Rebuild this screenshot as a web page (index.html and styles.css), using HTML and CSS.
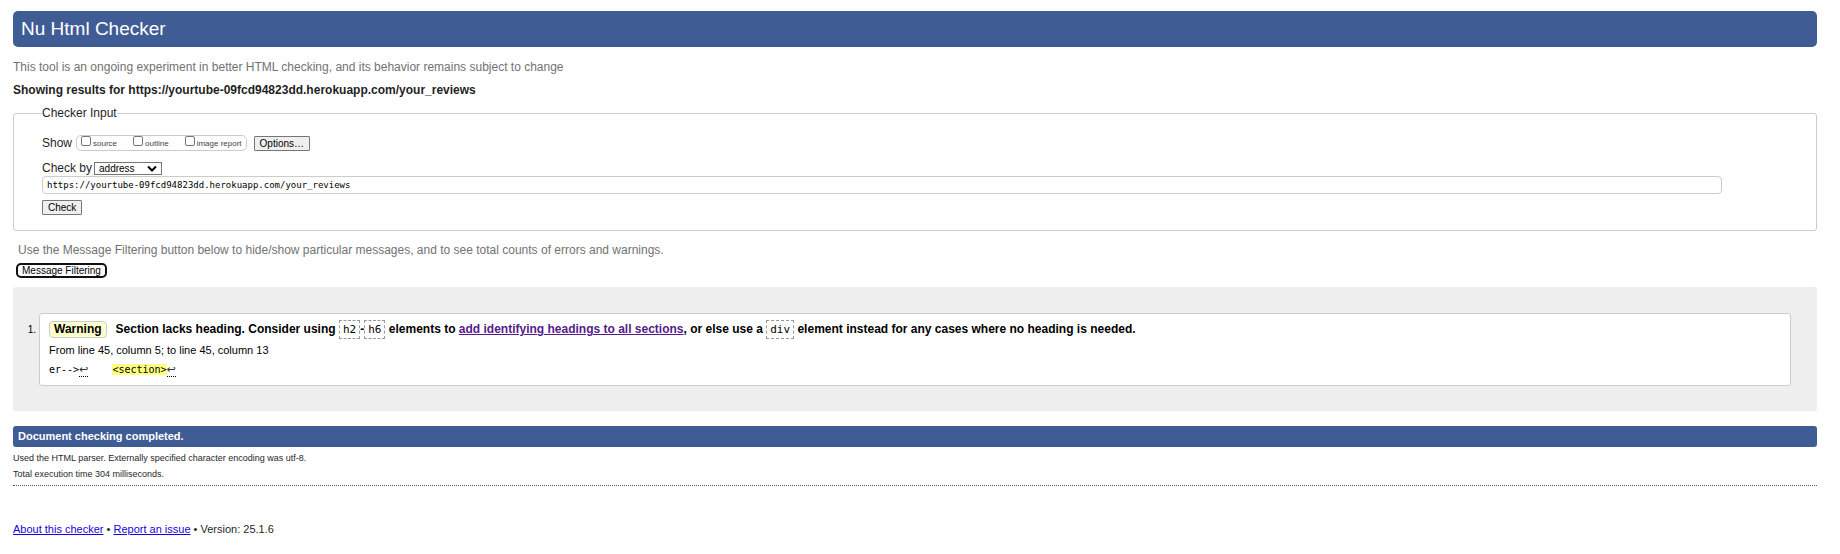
FILE: index.html
```html
<!DOCTYPE html>
<html lang="en">
<head>
<meta charset="utf-8">
<title>Nu Html Checker</title>
<link rel="stylesheet" href="styles.css">
</head>
<body>
<header class="banner"><h1>Nu Html Checker</h1></header>
<p class="note tagline">This tool is an ongoing experiment in better HTML checking, and its behavior remains subject to change</p>
<h2 class="target">Showing results for https://yourtube-09fcd94823dd.herokuapp.com/your_reviews</h2>
<form>
<fieldset class="checker">
  <legend>Checker Input</legend>
  <div class="row show-row">
    <span>Show</span>
    <div class="checks">
      <label><input type="checkbox">source</label>
      <label><input type="checkbox">outline</label>
      <label><input type="checkbox">image report</label>
    </div>
    <button type="button" class="btn options">Options…</button>
  </div>
  <div class="row by-row">
    <label for="by">Check by</label>
    <div class="picker">
      <select id="by"><option>address</option><option>file upload</option><option>text input</option></select>
      <svg viewBox="0 0 10 7" aria-hidden="true"><path d="M1 1.5 5 5.5 9 1.5"/></svg>
    </div>
  </div>
  <input class="url" type="text" aria-label="Address" value="https://yourtube-09fcd94823dd.herokuapp.com/your_reviews">
  <button type="button" class="btn check">Check</button>
</fieldset>
</form>
<p class="note hint">Use the Message Filtering button below to hide/show particular messages, and to see total counts of errors and warnings.</p>
<button type="button" class="filter">Message Filtering</button>
<main class="results">
  <ol>
    <li>
      <p class="message"><strong class="badge">Warning</strong><span>Section lacks heading. Consider using <code>h2</code>-<code>h6</code> elements to <a href="#headings">add identifying headings to all sections</a>, or else use a <code>div</code> element instead for any cases where no heading is needed.</span></p>
      <p class="location">From line 45, column 5; to line 45, column 13</p>
      <p class="extract">er--&gt;<span class="lf">↩</span>    <mark>&lt;section&gt;</mark><span class="lf">↩</span></p>
    </li>
  </ol>
</main>
<p class="done">Document checking completed.</p>
<p class="detail">Used the HTML parser. Externally specified character encoding was utf-8.</p>
<p class="detail">Total execution time 304 milliseconds.</p>
<hr>
<footer><a href="#about">About this checker</a> • <a href="#issue">Report an issue</a> • Version: 25.1.6</footer>
</body>
</html>
```
FILE: styles.css
```css
* { box-sizing: border-box; }
body {
  margin: 11px 23px 0 13px;
  font: 12px/16px "Liberation Sans", Arial, sans-serif;
  color: #1f1f1f;
  background: #fff;
}
h1, h2, p, ol { margin: 0; padding: 0; }
.banner { background: #3f5c94; border-radius: 5px; padding: 6px 8px; color: #fff; }
h1 { font-size: 19px; line-height: 24px; font-weight: 400; }
.note { color: #727272; }
.tagline { margin-top: 12px; }
.target { margin: 7px 0 8px; font-size: 12px; line-height: 16px; }
.checker {
  margin: 0;
  border: 1px solid #ccc;
  border-radius: 3px;
  padding: 15px 94px 15px 28px;
  display: flex;
  flex-direction: column;
  align-items: flex-start;
}
legend { padding: 0; line-height: 14px; }
.row { display: flex; align-items: center; }
.checks {
  display: flex;
  gap: 16px;
  margin: 0 7px 0 4px;
  padding: 0 4px;
  height: 16px;
  border: 1px solid #ccc;
  border-radius: 5px;
  font-size: 8px;
  color: #444;
}
.checks label { display: flex; align-items: center; gap: 2px; line-height: 13px; }
.checks input {
  appearance: none;
  width: 10px;
  height: 10px;
  margin: 0 0 4px;
  border: 1px solid #767676;
  border-radius: 2px;
  background: #fff;
}
.btn {
  font: 10px/13px "Liberation Sans", Arial, sans-serif;
  color: #000;
  background: #efefef;
  border: 1px solid #767676;
  border-radius: 1px;
  padding: 0 5px;
}
.by-row { gap: 2px; margin-top: 9px; }
.picker { display: grid; align-items: center; }
.picker > * { grid-area: 1 / 1; }
select {
  appearance: none;
  width: 68px;
  height: 13px;
  padding: 0 4px;
  border: 1px solid #767676;
  border-radius: 0;
  background: #fff;
  color: #000;
  font: 10px/11px "Liberation Sans", Arial, sans-serif;
}
.picker svg {
  width: 10px;
  height: 7px;
  justify-self: end;
  margin-right: 5px;
  fill: none;
  stroke: #000;
  stroke-width: 2;
  pointer-events: none;
}
.url {
  width: 100%;
  height: 18px;
  padding: 0 4px;
  border: 1px solid #ccc;
  border-radius: 4px;
  font: 9px "DejaVu Sans Mono", monospace;
  color: #000;
}
.check { margin-top: 6px; }
.hint { margin: 11px 5px 5px; }
.filter {
  display: block;
  margin: 0 3px 9px;
  padding: 0 4px;
  border: 2px solid #101010;
  border-radius: 5px;
  background: #fff;
  color: #000;
  font: 10px/11px "Liberation Sans", Arial, sans-serif;
}
.results { background: #eee; border-radius: 3px; padding: 26px 26px 25px; color: #000; }
.results ol { list-style: none; counter-reset: item; }
.results li {
  position: relative;
  background: #fff;
  border: 1px solid #ccc;
  border-radius: 3px;
  padding: 5px 9px 6px;
}
.results li::before {
  counter-increment: item;
  content: counter(item) ".";
  position: absolute;
  right: calc(100% + 4px);
  top: 8px;
  font-size: 10px;
}
.message { display: flex; align-items: center; gap: 9px; font-weight: 700; line-height: 20px; }
.badge {
  border: 1px solid #ccc;
  border-radius: 4px;
  background: #ffffcc;
  padding: 0 4px;
  line-height: 15px;
}
code {
  border: 1px dashed #999;
  padding: 2px 3px;
  font: 11px "DejaVu Sans Mono", monospace;
}
.message a { color: #551a8b; }
.location { font-size: 11px; line-height: 16px; margin-top: 3px; }
.extract { font: 10px/19px "DejaVu Sans Mono", monospace; margin-top: 2px; white-space: pre; }
mark { background: #ffff80; color: #000; }
.lf { border-bottom: 1px dotted #000; color: #333; font: 11px/12px "DejaVu Sans", sans-serif; }
.done {
  margin-top: 15px;
  padding: 2px 5px 3px;
  background: #3f5c94;
  border-radius: 3px;
  color: #fff;
  font-size: 11px;
  font-weight: 700;
}
.detail { font-size: 9px; line-height: 16px; }
.done + .detail { margin-top: 3px; }
hr { margin: 3px 0 35px; border: 0; border-top: 1px dotted #555; }
footer { font-size: 11px; }
footer a { color: #1a00e0; }
```
